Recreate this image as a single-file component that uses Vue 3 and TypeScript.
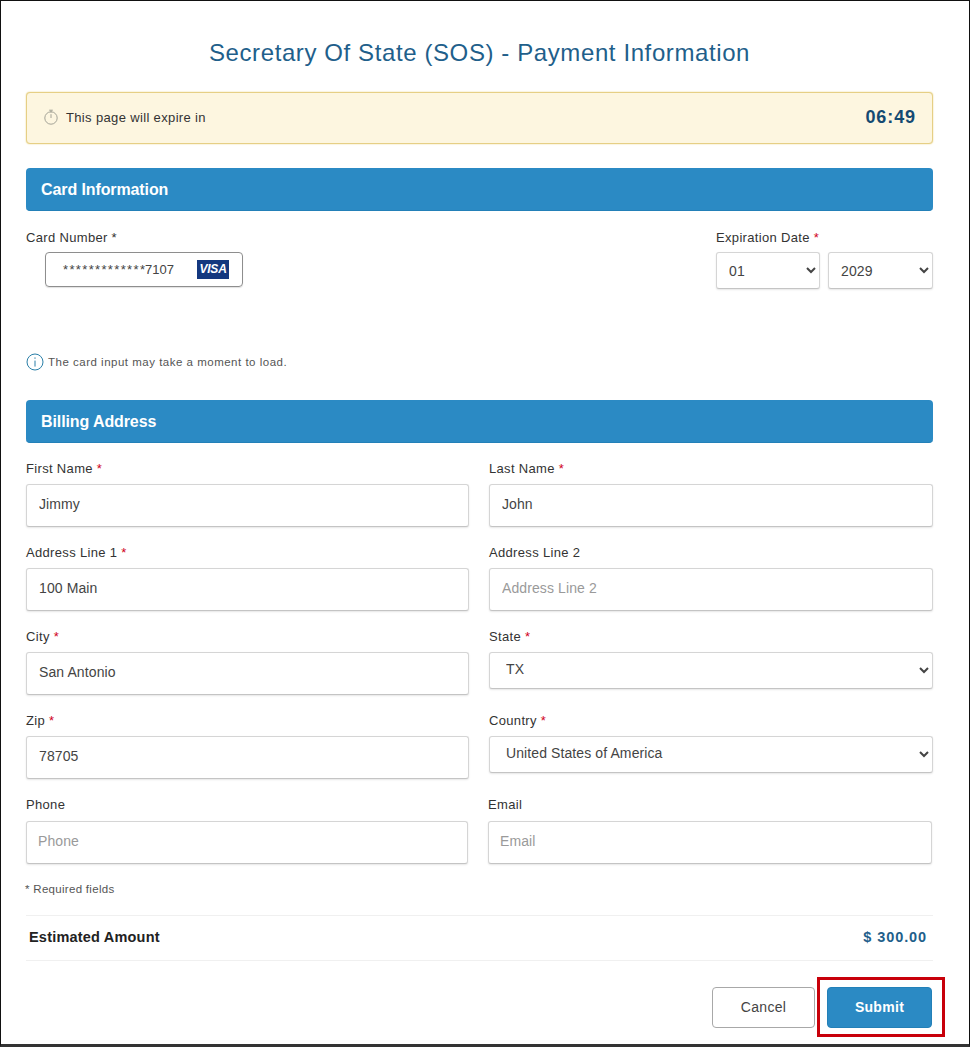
<script setup lang="ts">
interface Field {
  label: string
  required?: boolean
  value?: string
  placeholder?: string
  options?: string[]
}

const rows: Field[][] = [
  [
    { label: 'First Name', required: true, value: 'Jimmy' },
    { label: 'Last Name', required: true, value: 'John' },
  ],
  [
    { label: 'Address Line 1', required: true, value: '100 Main' },
    { label: 'Address Line 2', placeholder: 'Address Line 2' },
  ],
  [
    { label: 'City', required: true, value: 'San Antonio' },
    { label: 'State', required: true, options: ['TX'] },
  ],
  [
    { label: 'Zip', required: true, value: '78705' },
    { label: 'Country', required: true, options: ['United States of America'] },
  ],
]

const contact: Field[] = [
  { label: 'Phone', placeholder: 'Phone' },
  { label: 'Email', placeholder: 'Email' },
]
</script>

<template>
  <div class="frame">
    <h1 class="title">Secretary Of State (SOS) - Payment Information</h1>

    <div class="alert">
      <div class="alert-left">
        <svg class="timer" viewBox="0 0 16 16" width="16" height="16" fill="none" stroke="#9a9a8e" stroke-width="0.9">
          <circle cx="8" cy="9" r="6.2" />
          <path d="M6.2 1.2h3.6M8 1.4v2.2M8 5.2V9" />
        </svg>
        <span>This page will expire in</span>
      </div>
      <strong class="clock">06:49</strong>
    </div>

    <h2 class="section">Card Information</h2>

    <div class="card-row">
      <div>
        <div class="label">Card Number *</div>
        <div class="card-input">
          <span class="card-num"><span class="card-mask">************</span>*7107</span>
          <span class="visa">VISA</span>
        </div>
      </div>
      <div class="expiry">
        <div class="label">Expiration Date <span class="req">*</span></div>
        <div class="expiry-selects">
          <select class="control select small"><option>01</option></select>
          <select class="control select small"><option>2029</option></select>
        </div>
      </div>
    </div>

    <div class="note">
      <svg viewBox="0 0 18 18" width="18" height="18" fill="none" stroke="#2a7fa8" stroke-width="1">
        <circle cx="9" cy="9" r="8" />
        <path d="M9 7.6v6M9 4.4v1.4" />
      </svg>
      <span>The card input may take a moment to load.</span>
    </div>

    <h2 class="section billing">Billing Address</h2>

    <div class="grid">
      <template v-for="(row, r) in rows" :key="r">
        <div v-for="field in row" :key="field.label" class="field">
          <div class="label">{{ field.label }} <span v-if="field.required" class="req">*</span></div>
          <select v-if="field.options" class="control select">
            <option v-for="opt in field.options" :key="opt">{{ opt }}</option>
          </select>
          <input v-else class="control" :value="field.value" :placeholder="field.placeholder" />
        </div>
      </template>
    </div>

    <div class="grid contact">
      <div v-for="field in contact" :key="field.label" class="field">
        <div class="label">{{ field.label }}</div>
        <input class="control" :placeholder="field.placeholder" />
      </div>
    </div>

    <p class="required-note">* Required fields</p>

    <div class="amount">
      <strong class="amount-label">Estimated Amount</strong>
      <strong class="amount-value">$ 300.00</strong>
    </div>

    <div class="actions">
      <button class="btn cancel" type="button">Cancel</button>
      <div class="highlight">
        <button class="btn submit" type="button">Submit</button>
      </div>
    </div>
  </div>
</template>

<style scoped>
.frame {
  box-sizing: border-box;
  width: 970px;
  height: 1047px;
  overflow: hidden;
  background: #fff;
  border: 1px solid #111;
  border-bottom: 3px solid #333;
  padding: 0 36px 0 25px;
  font-family: "Liberation Sans", Arial, sans-serif;
  color: #333;
}
.title {
  margin: 37px 0 0;
  height: 30px;
  line-height: 30px;
  text-align: center;
  font-size: 24px;
  font-weight: 400;
  letter-spacing: 0.6px;
  color: #1f5f8b;
}
.alert {
  box-sizing: border-box;
  height: 52px;
  margin-top: 24px;
  padding: 0 16px 2px;
  display: flex;
  align-items: center;
  justify-content: space-between;
  background: #fdf6e0;
  border: 1px solid #e6cf85;
  border-radius: 4px;
  box-shadow: 0 0 1.5px #e3c96f;
  font-size: 13px;
  letter-spacing: 0.35px;
}
.alert-left {
  display: flex;
  align-items: center;
  gap: 7px;
}
.clock {
  font-size: 18px;
  letter-spacing: 0.9px;
  color: #154a72;
}
.section {
  box-sizing: border-box;
  height: 43px;
  margin: 24px 0 0;
  padding: 0 15px;
  line-height: 43px;
  font-size: 16px;
  font-weight: 700;
  letter-spacing: -0.1px;
  color: #fff;
  background: #2b8ac4;
  border-bottom: 1px solid #2380b8;
  border-radius: 4px;
}
.section.billing {
  margin-top: 28px;
}
.label {
  height: 16px;
  line-height: 16px;
  font-size: 13px;
  letter-spacing: 0.33px;
  color: #333;
  white-space: pre-wrap;
}
.req {
  color: #d0021b;
}
.card-row {
  display: flex;
  justify-content: space-between;
  margin-top: 19px;
}
.card-input {
  box-sizing: border-box;
  width: 198px;
  height: 35px;
  margin: 6px 0 0 19px;
  padding: 0 13px 0 17px;
  display: flex;
  align-items: center;
  justify-content: space-between;
  border: 1px solid #8e8e8e;
  border-radius: 4px;
  box-shadow: 0 1px 1px rgba(0, 0, 0, 0.12);
}
.card-num {
  font-size: 13px;
  color: #444;
}
.card-mask {
  letter-spacing: 1.35px;
}
.visa {
  width: 32px;
  height: 19px;
  line-height: 19px;
  text-align: center;
  font-size: 12px;
  font-weight: 700;
  font-style: italic;
  letter-spacing: -0.2px;
  color: #fff;
  background: #14387f;
}
.expiry {
  width: 217px;
}
.expiry-selects {
  display: grid;
  grid-template-columns: 104px 105px;
  column-gap: 8px;
  margin-top: 6px;
}
.control {
  box-sizing: border-box;
  display: block;
  width: 100%;
  height: 43px;
  margin-top: 7px;
  padding: 0 12px 4px;
  background: #fff;
  border: 1px solid #d5d5d5;
  border-bottom-color: #c4c4c4;
  border-radius: 3px;
  box-shadow: 0 1px 2px rgba(0, 0, 0, 0.1);
  font-family: inherit;
  font-size: 14px;
  letter-spacing: 0.1px;
  color: #444;
  outline: none;
}
.control::placeholder {
  color: #9a9a9a;
  opacity: 1;
}
.select {
  height: 37px;
  margin-bottom: 5px;
}
.select.small {
  margin: 0;
  min-width: 0;
  padding: 0 8px;
}
.note {
  display: flex;
  align-items: center;
  gap: 4px;
  margin-top: 63px;
  height: 20px;
  font-size: 11.5px;
  letter-spacing: 0.5px;
  color: #555;
}
.grid {
  display: grid;
  grid-template-columns: 443px 444px;
  column-gap: 20px;
  row-gap: 18px;
  margin-top: 18px;
}
.grid.contact {
  grid-template-columns: 442px 444px;
  column-gap: 20px;
  margin-top: 18px;
}
.contact .control {
  margin-top: 8px;
  padding-left: 11px;
}
.field {
  min-width: 0;
}
.required-note {
  margin: 18px 0 0 -1px;
  height: 14px;
  line-height: 14px;
  font-size: 11.5px;
  letter-spacing: 0.3px;
  color: #555;
}
.amount {
  box-sizing: border-box;
  height: 46px;
  margin-top: 19px;
  padding: 0 6px 2px 3px;
  display: flex;
  align-items: center;
  justify-content: space-between;
  border-top: 1px solid #f0f0f0;
  border-bottom: 1px solid #f0f0f0;
  width: 907px;
}
.amount-label {
  font-size: 14.5px;
  letter-spacing: 0.2px;
  color: #222;
}
.amount-value {
  font-size: 14.5px;
  color: #1f5f8b;
  letter-spacing: 0.9px;
}
.actions {
  display: flex;
  justify-content: flex-end;
  align-items: center;
  gap: 2px;
  margin-top: 16px;
  margin-right: -12px;
}
.btn {
  box-sizing: border-box;
  height: 41px;
  border-radius: 4px;
  font-family: inherit;
  font-size: 14px;
  letter-spacing: 0.3px;
}
.cancel {
  width: 103px;
  background: #fff;
  border: 1px solid #a8a8a8;
  color: #444;
}
.highlight {
  box-sizing: border-box;
  width: 128px;
  height: 60px;
  padding-left: 7px;
  display: flex;
  align-items: center;
  border: 3px solid #c8000a;
}
.submit {
  width: 105px;
  background: #2b8ac4;
  border: 1px solid #2380b8;
  color: #fff;
  font-weight: 700;
}
</style>
